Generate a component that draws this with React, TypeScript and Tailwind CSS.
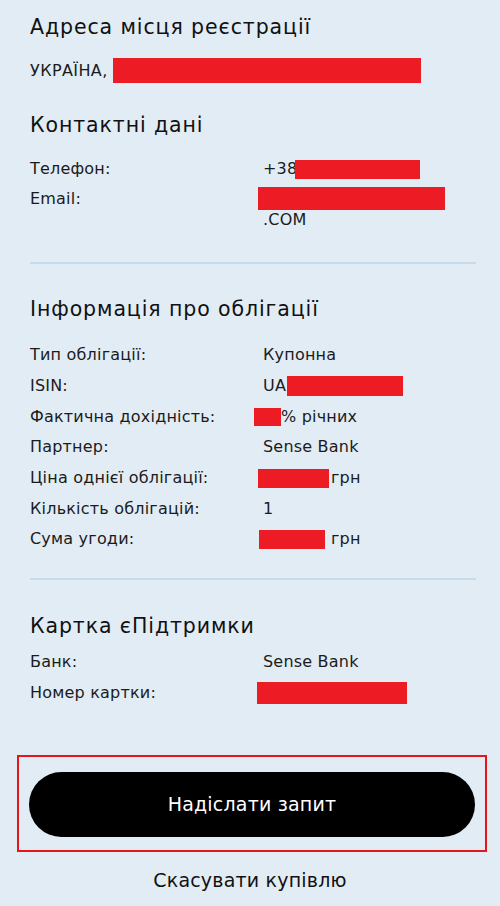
import React from "react";

/* redacted value block */
const Redact = ({ className = "" }: { className?: string }) => (
  <span className={`inline-block shrink-0 bg-[#ed1c24] align-middle ${className}`} />
);

const Row = ({ label, children }: { label: string; children: React.ReactNode }) => (
  <div className="flex h-[30.7px] items-center">
    <div className="w-[233px] shrink-0">{label}</div>
    <div className="flex items-center">{children}</div>
  </div>
);

const H = ({ children }: { children: React.ReactNode }) => (
  <h2 className="h-[28px] whitespace-nowrap text-[20.5px] leading-[28px] tracking-[0.9px] text-[#111]">{children}</h2>
);

export default function App() {
  return (
    <div
      className="min-h-[906px] w-[500px] bg-[#e2ecf5] text-[16px] tracking-[0.2px] text-[#1b1b1b]"
      style={{ fontFamily: "'DejaVu Sans', 'Noto Sans', sans-serif" }}
    >
      <div className="pl-[30px] pr-[24px] pt-[13px]">
        {/* address */}
        <H>Адреса місця реєстрації</H>
        <div className="mt-[17px] flex h-[25px] items-center">
          <span className="w-[83px] shrink-0 whitespace-nowrap tracking-[0.4px]">УКРАЇНА,</span>
          <Redact className="h-[25px] w-[308px]" />
        </div>

        {/* contacts */}
        <div className="mt-[28px]">
          <H>Контактні дані</H>
        </div>
        <div className="mt-[20px] flex h-[20px] items-center">
          <div className="w-[233px] shrink-0">Телефон:</div>
          <span className="w-[32px] shrink-0">+38</span>
          <Redact className="h-[19px] w-[125px]" />
        </div>
        <div className="mt-[8px] flex">
          <div className="h-[23px] w-[233px] shrink-0 leading-[23px]">Email:</div>
          <div className="flex flex-col">
            <Redact className="-ml-[5px] h-[23px] w-[187px]" />
            <span className="h-[20px] leading-[20px]">.COM</span>
          </div>
        </div>

        <div className="mt-[32px] h-[2px] bg-[#c8dbea]" />

        {/* bond info */}
        <div className="mt-[31px]">
          <H>Інформація про облігації</H>
        </div>
        <div className="mt-[17px]">
          <Row label="Тип облігації:">Купонна</Row>
          <Row label="ISIN:">
            <span className="w-[24px] shrink-0">UA</span>
            <Redact className="h-[20px] w-[116px]" />
          </Row>
          <Row label="Фактична дохідність:">
            <Redact className="-ml-[9px] h-[18px] w-[27px]" />
            <span className="whitespace-nowrap">% річних</span>
          </Row>
          <Row label="Партнер:">Sense Bank</Row>
          <Row label="Ціна однієї облігації:">
            <Redact className="-ml-[5px] h-[19px] w-[71px]" />
            <span className="ml-[2px]">грн</span>
          </Row>
          <Row label="Кількість облігацій:">1</Row>
          <Row label="Сума угоди:">
            <Redact className="-ml-[4px] h-[19px] w-[66px]" />
            <span className="ml-[6px]">грн</span>
          </Row>
        </div>

        <div className="mt-[23px] h-[2px] bg-[#c8dbea]" />

        {/* support card */}
        <div className="mt-[32px]">
          <H>Картка єПідтримки</H>
        </div>
        <div className="mt-[7px]">
          <Row label="Банк:">Sense Bank</Row>
          <Row label="Номер картки:">
            <Redact className="-ml-[6px] h-[22px] w-[150px]" />
          </Row>
        </div>
      </div>

      {/* highlighted submit */}
      <div className="ml-[17px] mr-[13px] mt-[47px] border-2 border-[#e8141c] px-[10px] pb-[13px] pt-[15px]">
        <button className="flex h-[65px] w-full items-center justify-center rounded-full bg-black text-[19px] tracking-[0.2px] text-white">
          Надіслати запит
        </button>
      </div>

      <div className="mt-[14px] h-[28px] text-center text-[19px] leading-[28px] text-[#111]">
        Скасувати купівлю
      </div>
    </div>
  );
}
